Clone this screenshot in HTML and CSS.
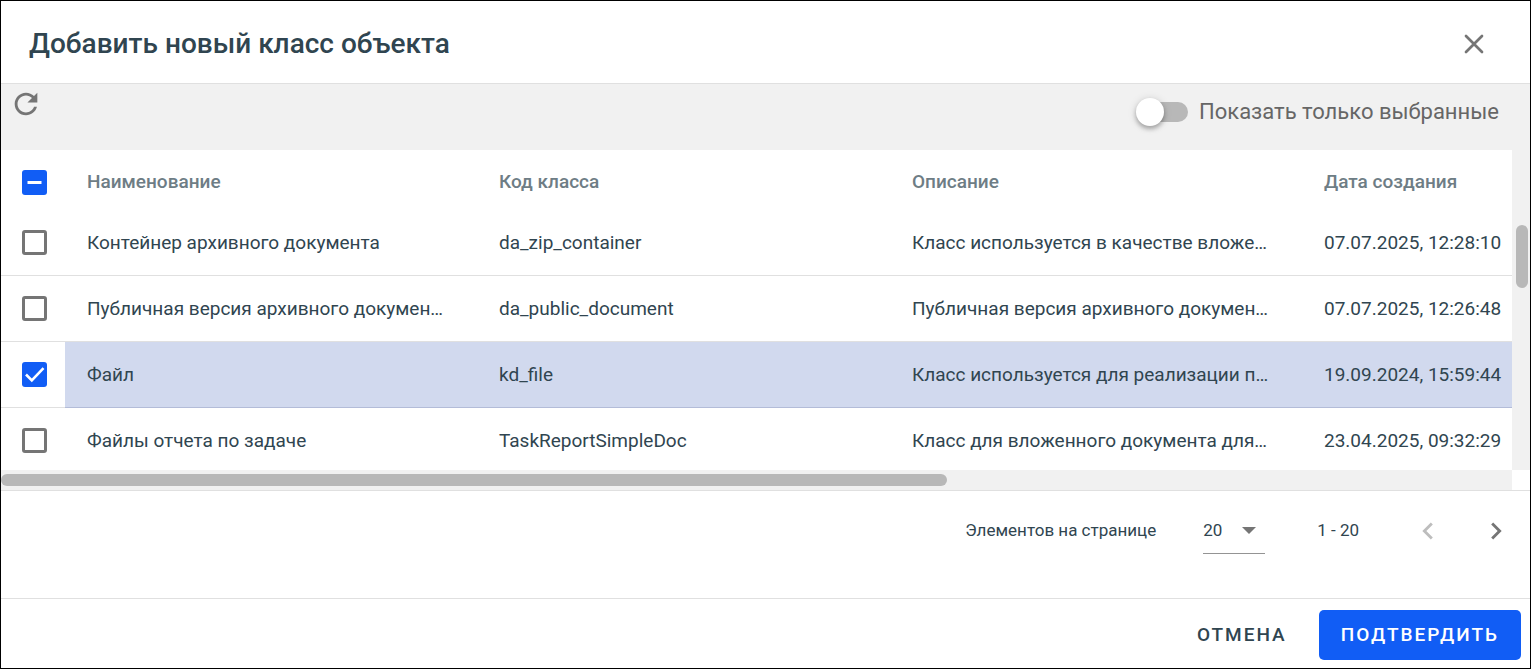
FILE: index.html
```
<!DOCTYPE html>
<html lang="ru">
<head>
    <meta charset="UTF-8">
    <meta name="viewport" content="width=device-width, initial-scale=1.0">
    <title>Добавить новый класс объекта</title>
    <link rel="stylesheet" href="styles.css">
</head>
<body>
    <div class="dialog">
        <header class="dialog-header">
            <h1>Добавить новый класс объекта</h1>
            <button type="button" class="icon-btn" aria-label="Закрыть">
                <svg width="22" height="22" viewBox="0 0 22 22">
                    <path d="M3 3l16 16M19 3L3 19" fill="none" stroke="currentColor" stroke-width="2.7" stroke-linecap="round"/>
                </svg>
            </button>
        </header>

        <div class="toolbar">
            <button type="button" class="icon-btn" aria-label="Обновить">
                <svg width="34" height="34" viewBox="0 0 24 24">
                    <path fill="currentColor" d="M17.65 6.35C16.2 4.9 14.21 4 12 4c-4.42 0-7.99 3.58-7.99 8s3.57 8 7.99 8c3.73 0 6.84-2.55 7.73-6h-2.08c-.82 2.33-3.04 4-5.65 4-3.31 0-6-2.69-6-6s2.69-6 6-6c1.66 0 3.14.69 4.22 1.78L13 11h7V4l-2.35 2.35z"/>
                </svg>
            </button>
            <label class="switch-label" for="onlySelected">
                <input type="checkbox" role="switch" id="onlySelected" class="switch">
                Показать только выбранные
            </label>
        </div>

        <div class="grid-area">
            <div class="table-wrap">
                <table class="class-table">
                    <colgroup>
                        <col class="col-check">
                        <col class="col-name">
                        <col class="col-code">
                        <col class="col-desc">
                        <col class="col-date">
                    </colgroup>
                    <thead>
                        <tr>
                            <th class="check-cell"><input type="checkbox" id="selectAll" class="checkbox" aria-label="Выбрать все"></th>
                            <th>Наименование</th>
                            <th>Код класса</th>
                            <th>Описание</th>
                            <th>Дата создания</th>
                        </tr>
                    </thead>
                    <tbody>
                        <tr>
                            <td class="check-cell"><input type="checkbox" class="checkbox" aria-label="Контейнер архивного документа"></td>
                            <td>Контейнер архивного документа</td>
                            <td>da_zip_container</td>
                            <td>Класс используется в качестве вложе…</td>
                            <td>07.07.2025, 12:28:10</td>
                        </tr>
                        <tr>
                            <td class="check-cell"><input type="checkbox" class="checkbox" aria-label="Публичная версия архивного документа"></td>
                            <td>Публичная версия архивного докумен…</td>
                            <td>da_public_document</td>
                            <td>Публичная версия архивного докумен…</td>
                            <td>07.07.2025, 12:26:48</td>
                        </tr>
                        <tr class="selected">
                            <td class="check-cell"><input type="checkbox" class="checkbox" aria-label="Файл" checked></td>
                            <td>Файл</td>
                            <td>kd_file</td>
                            <td>Класс используется для реализации п…</td>
                            <td>19.09.2024, 15:59:44</td>
                        </tr>
                        <tr>
                            <td class="check-cell"><input type="checkbox" class="checkbox" aria-label="Файлы отчета по задаче"></td>
                            <td>Файлы отчета по задаче</td>
                            <td>TaskReportSimpleDoc</td>
                            <td>Класс для вложенного документа для…</td>
                            <td>23.04.2025, 09:32:29</td>
                        </tr>
                    </tbody>
                </table>
            </div>
            <div class="scroll-y"><div class="thumb-y"></div></div>
            <div class="scroll-x"><div class="thumb-x"></div></div>
        </div>

        <div class="paginator">
            <label for="pageSize">Элементов на странице</label>
            <div class="select-box">
                <select id="pageSize">
                    <option>10</option>
                    <option selected>20</option>
                    <option>50</option>
                </select>
                <svg width="14" height="7" viewBox="0 0 14 7">
                    <path fill="currentColor" d="M0 0h14L7 7z"/>
                </svg>
            </div>
            <span class="range">1 - 20</span>
            <div class="pages">
                <button type="button" class="icon-btn" aria-label="Предыдущая страница" disabled>
                    <svg width="34" height="34" viewBox="0 0 24 24">
                        <path fill="currentColor" d="M15.41 7.41L14 6l-6 6 6 6 1.41-1.41L10.83 12z"/>
                    </svg>
                </button>
                <button type="button" class="icon-btn" aria-label="Следующая страница">
                    <svg width="34" height="34" viewBox="0 0 24 24">
                        <path fill="currentColor" d="M10 6L8.59 7.41 13.17 12l-4.58 4.59L10 18l6-6z"/>
                    </svg>
                </button>
            </div>
        </div>

        <footer class="dialog-footer">
            <button type="button" class="btn">ОТМЕНА</button>
            <button type="button" class="btn btn-primary">ПОДТВЕРДИТЬ</button>
        </footer>
    </div>

    <script>
        // part of the rows is selected
        document.getElementById('selectAll').indeterminate = true;
    </script>
</body>
</html>
```
FILE: styles.css
```
* {
    box-sizing: border-box;
}
body {
    margin: 0;
    font-family: Roboto, "Liberation Sans", sans-serif;
    color: #304550;
    background-color: white;
}
button, select, input {
    font: inherit;
    color: inherit;
    margin: 0;
}
svg {
    display: block;
}
.dialog {
    display: flex;
    flex-direction: column;
    height: 100vh;
    border: 1px solid black;
}
.dialog-header {
    display: flex;
    align-items: center;
    justify-content: space-between;
    height: 83px;
    flex-shrink: 0;
    padding: 4px 45px 0 28px;
    border-bottom: 1px solid #e0e0e0;
}
.dialog-header h1 {
    margin: 0;
    font-size: 28px;
    line-height: 36px;
    font-weight: 500;
}
.icon-btn {
    padding: 0;
    border: none;
    background: none;
    color: #757575;
    cursor: pointer;
}
.icon-btn:disabled {
    color: #bdbdbd;
    cursor: default;
}
.toolbar {
    display: flex;
    align-items: flex-start;
    justify-content: space-between;
    height: 66px;
    flex-shrink: 0;
    padding: 3px 31px 0 8px;
    background-color: #f1f1f1;
}
.switch-label {
    display: flex;
    align-items: center;
    gap: 11px;
    padding-top: 12px;
    font-size: 22px;
    line-height: 26px;
    color: #666;
}
.switch {
    appearance: none;
    width: 48px;
    height: 20px;
    border-radius: 10px;
    background-color: #b8b8b8;
    cursor: pointer;
}
.switch::before {
    content: "";
    display: block;
    width: 28px;
    height: 28px;
    margin: -4px;
    border-radius: 50%;
    background-color: white;
    box-shadow: 0 3px 4px rgba(0,0,0,0.25), 0 1px 8px rgba(0,0,0,0.15);
}
.switch:checked {
    background-color: #115df5;
}
.grid-area {
    flex: 1;
    min-height: 0;
    display: grid;
    grid-template-columns: minmax(0, 1fr) 18px;
    grid-template-rows: minmax(0, 1fr) 20px;
}
.table-wrap {
    overflow: hidden;
}
.class-table {
    table-layout: fixed;
    width: 1713px;
    border-collapse: separate;
    border-spacing: 0;
    font-size: 19px;
    line-height: 24px;
}
.col-check {
    width: 64px;
}
.col-name,
.col-desc,
.col-date {
    width: 412px;
}
.col-code {
    width: 413px;
}
.class-table th,
.class-table td {
    height: 66px;
    padding: 0 22px;
    text-align: left;
    border-bottom: 1px solid #e0e0e0;
    white-space: nowrap;
    overflow: hidden;
    text-overflow: ellipsis;
}
.class-table th {
    height: 60px;
    padding-top: 4px;
    border-bottom: none;
    font-weight: 500;
    color: #6e7d85;
}
.class-table .check-cell {
    padding-left: 21px;
    padding-right: 0;
}
.class-table .selected td:not(.check-cell) {
    background-color: #d1d9ee;
    border-bottom-color: #b3bcd8;
}
.checkbox {
    appearance: none;
    display: block;
    width: 25px;
    height: 25px;
    border: 3px solid #757575;
    border-radius: 3px;
    cursor: pointer;
}
.checkbox:checked,
.checkbox:indeterminate {
    border: none;
    background: #115df5 center/25px no-repeat;
}
.checkbox:checked {
    background-image: url("data:image/svg+xml,%3Csvg xmlns='http://www.w3.org/2000/svg' viewBox='0 0 25 25'%3E%3Cpath d='M4 12.5l5.8 5.8L21.5 6.2' fill='none' stroke='white' stroke-width='2.6'/%3E%3C/svg%3E");
}
.checkbox:indeterminate {
    background-image: url("data:image/svg+xml,%3Csvg xmlns='http://www.w3.org/2000/svg' viewBox='0 0 25 25'%3E%3Cpath d='M5.5 12.5h14' stroke='white' stroke-width='3'/%3E%3C/svg%3E");
}
.scroll-y,
.scroll-x {
    background-color: #f1f1f1;
}
.scroll-y {
    padding: 75px 2px 0 4px;
}
.scroll-x {
    padding: 4px 0;
}
.thumb-y,
.thumb-x {
    background-color: #b8b8b8;
    border-radius: 6px;
}
.thumb-y {
    height: 63px;
}
.thumb-x {
    width: 946px;
    max-width: 100%;
    height: 12px;
}
.paginator {
    display: flex;
    align-items: flex-start;
    justify-content: flex-end;
    height: 108px;
    flex-shrink: 0;
    padding: 17px 17px 0 0;
    border-top: 1px solid #e0e0e0;
    font-size: 17px;
    line-height: 44px;
}
.select-box {
    display: grid;
    align-items: center;
    width: 62px;
    margin: 0 52px 0 47px;
    border-bottom: 1px solid #949494;
    color: #757575;
}
.select-box select,
.select-box svg {
    grid-area: 1 / 1;
}
.select-box select {
    appearance: none;
    width: 100%;
    height: 45px;
    padding: 0 0 2px;
    border: none;
    background: none;
    color: #304550;
}
.select-box svg {
    justify-self: end;
    margin-right: 9px;
    pointer-events: none;
}
.pages {
    display: flex;
    gap: 34px;
    padding-top: 6px;
    margin-left: 52px;
}
.dialog-footer {
    display: flex;
    justify-content: flex-end;
    gap: 10px;
    flex-shrink: 0;
    padding: 11px 9px 8px;
    border-top: 1px solid #e0e0e0;
}
.btn {
    height: 50px;
    padding: 0 22px 2px;
    border: none;
    border-radius: 5px;
    background: none;
    font-size: 19px;
    font-weight: 500;
    letter-spacing: 2px;
    cursor: pointer;
}
.btn-primary {
    background-color: #115df5;
    color: white;
}
```
